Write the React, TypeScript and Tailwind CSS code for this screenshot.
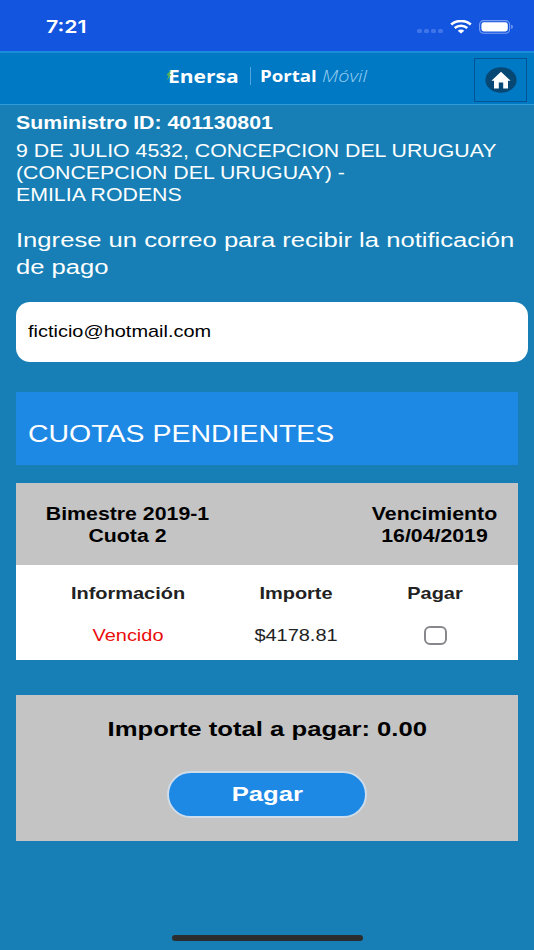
import type { ReactNode } from "react";

const account = {
  id: "401130801",
  address: ["9 DE JULIO 4532, CONCEPCION DEL URUGUAY", "(CONCEPCION DEL URUGUAY) -", "EMILIA RODENS"],
  email: "ficticio@hotmail.com",
};

const cuotas = [
  { period: "Bimestre 2019-1", name: "Cuota 2", due: "16/04/2019", status: "Vencido", amount: "$4178.81" },
];

// Wide lettering that grows from its left edge
function Wide({ children, className = "" }: { children: ReactNode; className?: string }) {
  return <span className={`block w-fit whitespace-nowrap origin-left scale-x-[1.217] ${className}`}>{children}</span>;
}

// Same lettering, centered in its cell
function WideCenter({ children, className = "" }: { children: ReactNode; className?: string }) {
  return <span className={`block whitespace-nowrap text-center origin-center scale-x-[1.217] ${className}`}>{children}</span>;
}

function StatusBar() {
  return (
    <div className="flex h-[51px] items-center justify-between bg-[#1355df] pt-[3px] pr-[20px] pl-[46px]">
      <span className="block w-fit origin-left scale-x-[1.217] font-['Inter'] text-[17.5px] leading-none font-semibold text-white">
        7:21
      </span>
      <div className="flex items-center">
        <div className="mt-[8px] mr-[7px] flex gap-[2px]">
          {[0, 1, 2, 3].map((i) => (
            <span key={i} className="h-[4px] w-[5px] rounded-[1.5px] bg-[#3f74ea]" />
          ))}
        </div>
        <svg width="22" height="14" viewBox="0 0 22 14" fill="none" className="mr-[7px]">
          <path d="M1.2 4.6C6.7-.2 15.3-.2 20.8 4.6" stroke="#fff" strokeWidth="2.7" />
          <path d="M4.7 8C8.3 4.9 13.7 4.9 17.3 8" stroke="#fff" strokeWidth="2.4" />
          <path d="M11 13.6 7.7 10.7C9.6 9.2 12.4 9.2 14.3 10.7Z" fill="#fff" />
        </svg>
        <svg width="35" height="14" viewBox="0 0 35 14" fill="none">
          <rect x=".6" y=".6" width="30" height="12.6" rx="4" stroke="#7ba0f3" strokeWidth="1.1" />
          <rect x="2.4" y="2.3" width="26.4" height="9.2" rx="2.4" fill="#fff" />
          <path d="M32.2 4.8C34.4 5.4 34.4 8.4 32.2 9Z" fill="#7ba0f3" />
        </svg>
      </div>
    </div>
  );
}

function Header() {
  return (
    <header className="flex h-[54px] items-center border-t-2 border-b border-t-[#1b8bdc] border-b-[#2f9bd8] bg-[#0079c4] pr-[7px] pl-[166px]">
      <div className="mb-[5px] flex h-[24px] items-center text-white">
        <div className="relative w-[75px] font-['Open_Sans']">
          <span className="block w-fit origin-left translate-x-[2px] scale-x-[1.2] text-[17.5px] leading-[20px] font-bold">Enersa</span>
          <svg width="7" height="12" viewBox="0 0 7 12" className="absolute top-[3px] left-0">
            <path d="M6 0 .2 6.2H2.6L.8 12 5.4 5H3.4Z" fill="#62b54a" />
          </svg>
        </div>
        <span className="mr-[9px] ml-[9px] h-[18px] w-px bg-[#4fa5dc]" />
        <span className="block w-[62px]">
          <span className="block w-fit origin-left scale-x-[1.2] font-['Open_Sans'] text-[15.5px] leading-[20px] font-bold">Portal</span>
        </span>
        <span className="block w-fit origin-left scale-x-[1.28] font-['Open_Sans'] text-[15.5px] leading-[20px] font-light text-[#9bcff0] italic">
          Móvil
        </span>
      </div>
      <button className="mt-[3px] ml-auto flex h-[44px] w-[53px] items-center justify-center border border-[#045491]">
        <svg width="32" height="26" viewBox="0 0 32 26">
          <ellipse cx="16" cy="13" rx="15.6" ry="12.8" fill="#074774" />
          <path d="M16 4.8 6.4 13.8H9V21.6H13.8V15.6H18.2V21.6H23V13.8H25.6Z" fill="#fff" />
        </svg>
      </button>
    </header>
  );
}

export default function App() {
  return (
    <div className="flex h-[950px] w-[534px] flex-col overflow-hidden bg-[#177fb5] font-['Liberation_Sans',sans-serif]">
      <StatusBar />
      <Header />

      <main className="flex flex-1 flex-col pr-4 pl-4 text-white">
        <Wide className="mt-[7px] text-[17.5px] leading-[22px] font-bold">Suministro ID: {account.id}</Wide>
        <div className="mt-[6px] text-[17.5px] leading-[22.1px]">
          {account.address.map((line) => (
            <Wide key={line}>{line}</Wide>
          ))}
        </div>
        <div className="mt-[20px] text-[21.05px] leading-[27px]">
          <Wide>Ingrese un correo para recibir la notificación</Wide>
          <Wide>de pago</Wide>
        </div>

        <div className="mt-[21.6px] flex h-[60.5px] w-[512px] items-center rounded-[14px] bg-white px-[12px] pb-px text-[16.4px] text-black">
          <Wide>{account.email}</Wide>
        </div>

        <h2 className="mt-[29.5px] flex h-[73.5px] items-center bg-[#1e88e5] pt-[11px] pl-[12px] text-[23.4px]">
          <Wide>CUOTAS PENDIENTES</Wide>
        </h2>

        {cuotas.map((c) => (
          <section key={c.name} className="mt-[18px]">
            <div className="grid h-[81.5px] grid-cols-[223px_112px_167px] content-center bg-[#c4c4c4] pt-[2px] text-[17.5px] leading-[22.3px] font-bold text-black">
              <div>
                <WideCenter>{c.period}</WideCenter>
                <WideCenter>{c.name}</WideCenter>
              </div>
              <div />
              <div>
                <WideCenter>Vencimiento</WideCenter>
                <WideCenter>{c.due}</WideCenter>
              </div>
            </div>
            <div className="grid h-[95px] grid-cols-[224px_112px_166px] grid-rows-[22px_22px] content-start items-center gap-y-[20px] bg-white pt-[17px] text-[16.4px] leading-[22px] text-[#222]">
              <WideCenter className="font-bold">Información</WideCenter>
              <WideCenter className="font-bold">Importe</WideCenter>
              <WideCenter className="font-bold">Pagar</WideCenter>
              <WideCenter className="text-[#ea0c0c]">{c.status}</WideCenter>
              <WideCenter>{c.amount}</WideCenter>
              <span className="mx-auto mt-px block h-[19px] w-[23px] rounded-[6px] border-2 border-[#88888c] bg-white" />
            </div>
          </section>
        ))}

        <section className="mt-[35px] flex h-[146px] flex-col items-center bg-[#c4c4c4] text-[21.1px] font-bold">
          <WideCenter className="mt-[21px] leading-[26px] text-black">Importe total a pagar: 0.00</WideCenter>
          <button className="mt-[29px] flex h-[47px] w-[200px] items-center justify-center rounded-full border-2 border-[#cfdcea] bg-[#1e88e5] pb-[2px]">
            <WideCenter>Pagar</WideCenter>
          </button>
        </section>

        <div className="mt-auto mb-[9px] h-[6px] w-[191px] self-center rounded-full bg-[#2b2d2f]" />
      </main>
    </div>
  );
}
